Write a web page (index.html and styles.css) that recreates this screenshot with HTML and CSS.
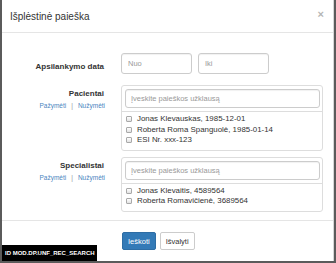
FILE: index.html
```html
<!DOCTYPE html>
<html lang="lt">
<head>
    <meta charset="UTF-8">
    <meta name="viewport" content="width=device-width, initial-scale=1.0">
    <title>Išplėstinė paieška</title>
    <link rel="stylesheet" href="styles.css">
</head>
<body>
    <div class="modal">
        <div class="modal-header">
            <h4 class="modal-title">Išplėstinė paieška</h4>
            <span class="close">&times;</span>
        </div>

        <div class="modal-body">
            <div class="row row-date">
                <div class="label-col">
                    <label class="label">Apsilankymo data</label>
                </div>
                <div class="ctrl-col dates">
                    <input type="text" class="input date" placeholder="Nuo">
                    <input type="text" class="input date" placeholder="Iki">
                </div>
            </div>

            <div class="row">
                <div class="label-col group-label">
                    <label class="label">Pacientai</label>
                    <div class="links"><a href="#">Pažymėti</a><span class="sep">|</span><a href="#">Nužymėti</a></div>
                </div>
                <div class="ctrl-col">
                    <div class="picker">
                        <div class="picker-search">
                            <input type="text" class="input" placeholder="Įveskite paieškos užklausą">
                        </div>
                        <ul class="picker-list">
                            <li><span class="check"></span>Jonas Klevauskas, 1985-12-01</li>
                            <li><span class="check"></span>Roberta Roma Spanguolė, 1985-01-14</li>
                            <li><span class="check"></span>ESI Nr. xxx-123</li>
                        </ul>
                    </div>
                </div>
            </div>

            <div class="row row-spec">
                <div class="label-col group-label">
                    <label class="label">Specialistai</label>
                    <div class="links"><a href="#">Pažymėti</a><span class="sep">|</span><a href="#">Nužymėti</a></div>
                </div>
                <div class="ctrl-col">
                    <div class="picker">
                        <div class="picker-search">
                            <input type="text" class="input" placeholder="Įveskite paieškos užklausą">
                        </div>
                        <ul class="picker-list">
                            <li><span class="check"></span>Jonas Klevaitis, 4589564</li>
                            <li><span class="check"></span>Roberta Romavičienė, 3689564</li>
                        </ul>
                    </div>
                </div>
            </div>
        </div>

        <div class="modal-footer">
            <button class="btn btn-primary">Ieškoti</button>
            <button class="btn btn-default">Išvalyti</button>
        </div>

        <div class="screen-id">ID MOD.DP.UNF_REC_SEARCH</div>
    </div>
</body>
</html>
```

FILE: styles.css
```css
body{
    margin: 0;
    background-color: #5b5b5b;
    font-family: "Liberation Sans", Arial, sans-serif;
    color: #333;
}
.modal{
    position: relative;
    margin-left: 2px;
    width: 331px;
    height: 261px;
    background-color: #fff;
    border-right: 1px solid #d6d6d6;
    overflow: hidden;
}
.modal-header{
    height: 32px;
    padding: 0 9px 0 8px;
    display: flex;
    align-items: center;
    justify-content: space-between;
    border-bottom: 1px solid #e5e5e5;
}
.modal-title{
    margin: 0;
    font-size: 10px;
    font-weight: normal;
    color: #333;
}
.close{
    font-size: 11px;
    font-weight: bold;
    color: #b5b5b5;
    margin-top: -4px;
}
.modal-body{
    padding-top: 20px;
    height: 167px;
    border-bottom: 1px solid #e5e5e5;
}
.row{
    display: flex;
    gap: 17px;
}
.label-col{
    width: 102px;
    text-align: right;
}
.ctrl-col{
    width: 202px;
}
.label{
    font-size: 8px;
    font-weight: bold;
    color: #333;
}
.row-date .label-col{
    line-height: 21px;
}
.dates{
    display: flex;
    gap: 6px;
}
.input{
    box-sizing: border-box;
    height: 21px;
    border: 1px solid #ccc;
    border-radius: 3px;
    padding: 0 6px;
    font-family: inherit;
    font-size: 7.5px;
    color: #555;
    box-shadow: inset 0 1px 1px rgba(0,0,0,.06);
}
.input::placeholder{
    color: #999;
}
.date{
    width: 71px;
}
.row + .row{
    margin-top: 8px;
}
.row-spec{
    margin-top: 6px !important;
}
.group-label{
    padding-top: 4px;
}
.group-label .label{
    display: block;
    line-height: 10px;
}
.links{
    font-size: 6.5px;
    margin-top: 3px;
    margin-right: -1px;
}
.links a{
    color: #4a86c0;
    text-decoration: none;
}
.sep{
    color: #999;
    margin: 0 5px;
}
.picker{
    border: 1px solid #ddd;
    border-radius: 3px;
}
.picker-search{
    padding: 1px 2px 3px 3px;
    border-bottom: 1px solid #ddd;
}
.picker-search .input{
    width: 100%;
    height: 19px;
    padding: 0 5px;
}
.picker-list{
    list-style: none;
    margin: 0;
    padding: 2px 0 4px 4px;
    font-size: 7.9px;
}
.picker-list li{
    height: 10.5px;
    line-height: 10.5px;
    display: flex;
    align-items: center;
}
.check{
    box-sizing: border-box;
    width: 6px;
    height: 6px;
    margin-right: 5px;
    border: 1px solid #a9a9a9;
    border-radius: 1px;
    background: linear-gradient(#fff, #e2e2e2);
}
.modal-footer{
    padding: 11px 0 0 120px;
    display: flex;
    gap: 4px;
}
.btn{
    height: 18px;
    padding: 0 5px;
    border-radius: 2px;
    font-family: inherit;
    font-size: 7.5px;
}
.btn-primary{
    background-color: #337ab7;
    border: 1px solid #2e6da4;
    color: #fff;
}
.btn-default{
    background-color: #fff;
    border: 1px solid #ccc;
    color: #333;
}
.screen-id{
    position: absolute;
    left: -2px;
    bottom: 0;
    width: 92px;
    height: 16px;
    padding-left: 5px;
    background-color: #000;
    color: #fff;
    font-size: 6px;
    font-weight: bold;
    line-height: 16px;
}
```
